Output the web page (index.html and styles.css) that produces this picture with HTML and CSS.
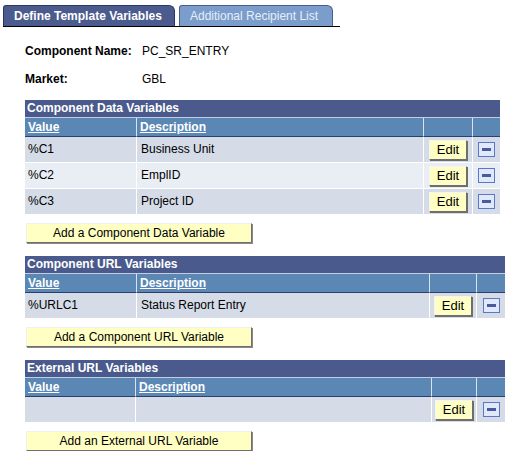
FILE: index.html
```html
<!DOCTYPE html>
<html>
<head>
<meta charset="utf-8">
<link rel="stylesheet" href="styles.css">
</head>
<body>
<div class="tabbar">
  <div class="tab tab-active">Define Template Variables</div>
  <div class="tab tab-inactive">Additional Recipient List</div>
</div>

<div class="content">
  <div class="info">
    <div class="info-row"><span class="label">Component Name:</span><span>PC_SR_ENTRY</span></div>
    <div class="info-row"><span class="label">Market:</span><span>GBL</span></div>
  </div>

  <div class="grid g1">
    <div class="title">Component Data Variables</div>
    <div class="hd"><a>Value</a></div>
    <div class="hd"><a>Description</a></div>
    <div class="hd"></div>
    <div class="hd last"></div>

    <div class="cell odd">%C1</div>
    <div class="cell odd desc">Business Unit</div>
    <div class="cell odd btncell"><span class="edit">Edit</span></div>
    <div class="cell odd btncell last"><span class="del"></span></div>

    <div class="cell even">%C2</div>
    <div class="cell even desc">EmplID</div>
    <div class="cell even btncell"><span class="edit">Edit</span></div>
    <div class="cell even btncell last"><span class="del"></span></div>

    <div class="cell odd">%C3</div>
    <div class="cell odd desc">Project ID</div>
    <div class="cell odd btncell"><span class="edit">Edit</span></div>
    <div class="cell odd btncell last"><span class="del"></span></div>
  </div>
  <div class="add">Add a Component Data Variable</div>

  <div class="grid g2">
    <div class="title">Component URL Variables</div>
    <div class="hd"><a>Value</a></div>
    <div class="hd"><a>Description</a></div>
    <div class="hd"></div>
    <div class="hd last"></div>

    <div class="cell odd">%URLC1</div>
    <div class="cell odd desc">Status Report Entry</div>
    <div class="cell odd btncell"><span class="edit">Edit</span></div>
    <div class="cell odd btncell last"><span class="del"></span></div>
  </div>
  <div class="add">Add a Component URL Variable</div>

  <div class="grid g3">
    <div class="title">External URL Variables</div>
    <div class="hd"><a>Value</a></div>
    <div class="hd"><a>Description</a></div>
    <div class="hd"></div>
    <div class="hd last"></div>

    <div class="cell odd"></div>
    <div class="cell odd desc"></div>
    <div class="cell odd btncell"><span class="edit">Edit</span></div>
    <div class="cell odd btncell last"><span class="del"></span></div>
  </div>
  <div class="add">Add an External URL Variable</div>
</div>
</body>
</html>
```

FILE: styles.css
```css
html, body {
  margin: 0;
  padding: 0;
  background: #ffffff;
  font-family: "Liberation Sans", Arial, sans-serif;
  font-size: 12px;
  color: #000000;
}

.tabbar {
  display: flex;
  gap: 4px;
  margin-left: 3px;
  width: 337px;
  padding-top: 5px;
  border-bottom: 1px solid #000000;
}

.tab {
  box-sizing: border-box;
  height: 21px;
  line-height: 20px;
  padding: 0 10px;
  border-radius: 3px 6px 0 0;
  border: 1px solid;
  border-bottom: none;
}

.tab-active {
  width: 172px;
  background: #4b5b8d;
  border-color: #2b3866;
  color: #ffffff;
  font-weight: bold;
}

.tab-inactive {
  width: 154px;
  background: #7b9dcc;
  border-color: #4b5b8d;
  color: #e8eef7;
}

.content {
  padding-left: 25px;
}

.info {
  margin-top: 10px;
}

.info-row {
  display: flex;
  height: 28px;
  line-height: 28px;
}

.label {
  width: 117px;
  font-weight: bold;
}

.grid {
  display: grid;
  margin-top: 7px;
}

.g1 { grid-template-columns: 112px 287px 49px 27px; width: 475px; }
.g2 { grid-template-columns: 112px 293px 47px 28px; width: 480px; margin-top: 13px; }
.g3 { grid-template-columns: 111px 296px 45px 28px; width: 480px; margin-top: 13px; }

.title {
  grid-column: 1 / -1;
  box-sizing: border-box;
  height: 18px;
  line-height: 17px;
  padding-left: 2px;
  background: #4a5a8c;
  border-bottom: 1px solid #c3cde0;
  color: #ffffff;
  font-weight: bold;
}

.hd {
  box-sizing: border-box;
  height: 19px;
  line-height: 18px;
  padding-left: 3px;
  background: #5b87b5;
  border-right: 1px solid #d8e2f0;
  border-bottom: 1px solid #2d3f6e;
  color: #ffffff;
  font-weight: bold;
}

.hd a {
  text-decoration: underline;
}

.hd.last,
.cell.last {
  border-right: none;
}

.cell {
  box-sizing: border-box;
  height: 26px;
  line-height: 25px;
  padding-left: 3px;
  border-right: 1px solid #ffffff;
  border-bottom: 1px solid #ffffff;
}

.cell.desc {
  padding-left: 4px;
}

.odd { background: #d5dce8; }
.even { background: #e9eef5; }

.btncell {
  display: flex;
  align-items: center;
  justify-content: center;
  padding-left: 0;
}

.edit {
  box-sizing: border-box;
  display: inline-block;
  width: 38px;
  height: 20px;
  line-height: 18px;
  text-align: center;
  font-size: 13px;
  background: #ffffc4;
  border: 1px solid;
  border-color: #f4f4f4 #6e6e6e #6e6e6e #f4f4f4;
  box-shadow: 1px 1px 0 #6e6e6e;
}

.del {
  box-sizing: border-box;
  display: inline-block;
  position: relative;
  width: 17px;
  height: 15px;
  background: #dfe9fb;
  border: 1px solid #5a78c8;
}

.del::after {
  content: "";
  position: absolute;
  left: 3px;
  top: 5px;
  width: 9px;
  height: 3px;
  background: #4a5a9c;
}

.add {
  box-sizing: border-box;
  width: 226px;
  height: 20px;
  line-height: 18px;
  margin-top: 8px;
  margin-left: 1px;
  text-align: center;
  background: #ffffc4;
  border: 1px solid;
  border-color: #f0f0f0 #6e6e6e #6e6e6e #f0f0f0;
  box-shadow: 1px 1px 0 #8a8a8a;
}
```
